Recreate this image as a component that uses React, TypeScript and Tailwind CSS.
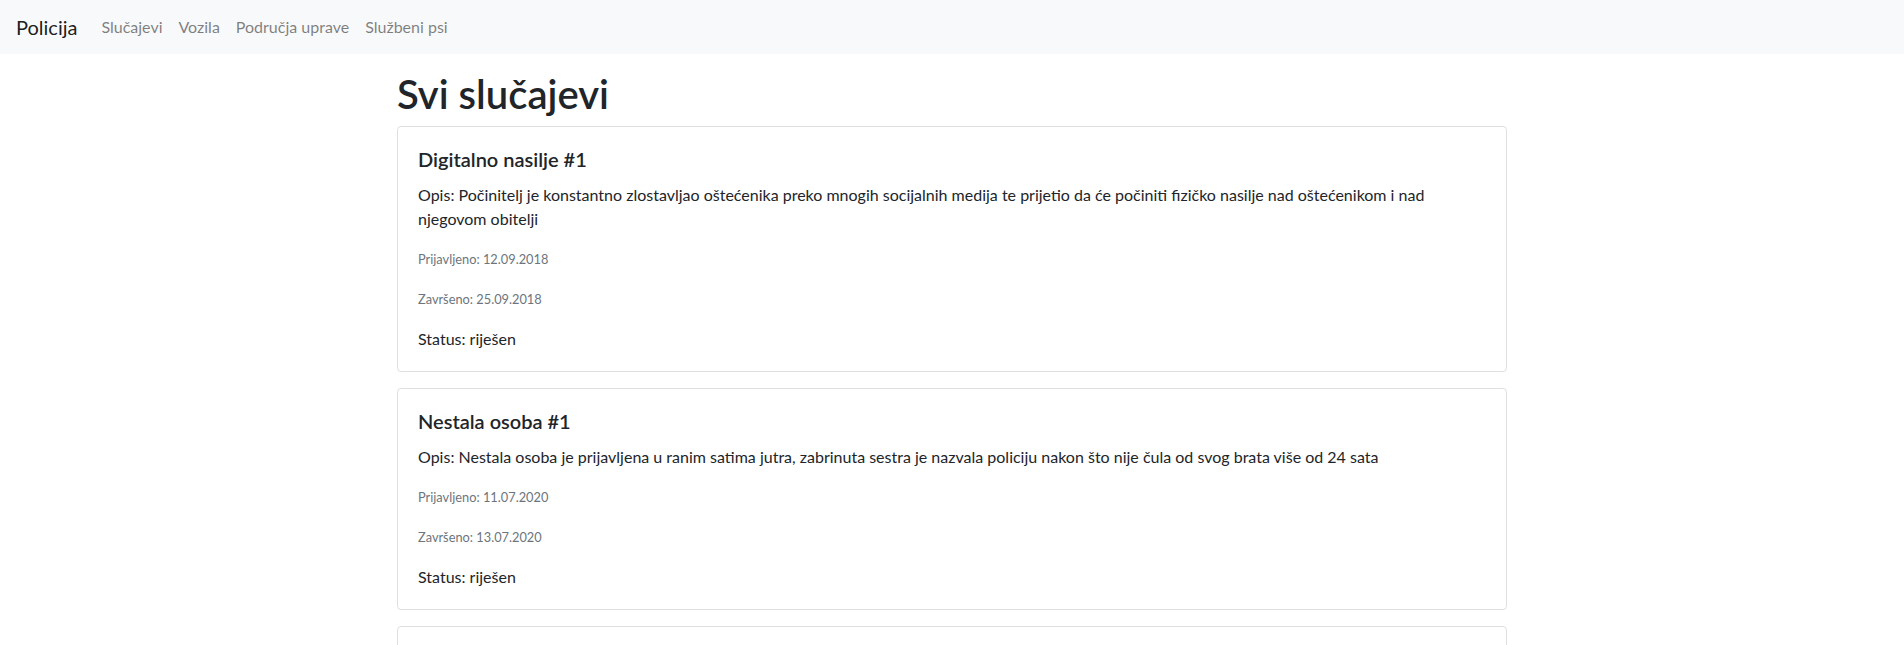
import React from "react";

const cases = [
  {
    title: "Digitalno nasilje #1",
    opis: "Počinitelj je konstantno zlostavljao oštećenika preko mnogih socijalnih medija te prijetio da će počiniti fizičko nasilje nad oštećenikom i nad njegovom obitelji",
    prijavljeno: "12.09.2018",
    zavrseno: "25.09.2018",
    status: "riješen",
  },
  {
    title: "Nestala osoba #1",
    opis: "Nestala osoba je prijavljena u ranim satima jutra, zabrinuta sestra je nazvala policiju nakon što nije čula od svog brata više od 24 sata",
    prijavljeno: "11.07.2020",
    zavrseno: "13.07.2020",
    status: "riješen",
  },
  {
    title: "Krađa vozila #1",
    opis: "Vlasnik je prijavio krađu vozila ispred stambene zgrade",
    prijavljeno: "02.03.2021",
    zavrseno: "10.03.2021",
    status: "riješen",
  },
];

export default function App() {
  return (
    <div className="min-h-screen bg-white text-[#212529] font-['Lato',sans-serif] text-base leading-6">
      <nav className="flex h-[54px] items-center bg-[#f8f9fa] px-4">
        <a className="mr-4 text-[20px] leading-[30px] text-black/90">Policija</a>
        <ul className="flex">
          {["Slučajevi", "Vozila", "Područja uprave", "Službeni psi"].map((l) => (
            <li key={l}>
              <a className="block px-2 py-2 text-black/50">{l}</a>
            </li>
          ))}
        </ul>
      </nav>
      <div className="mx-auto w-[1140px] px-[15px]">
        <h1 className="mt-4 mb-2 text-[40px] font-semibold leading-[48px]">Svi slučajevi</h1>
        {cases.map((c) => (
          <div key={c.title} className="mb-4 rounded border border-black/[0.125] p-5">
            <h5 className="mb-3 text-[20px] font-semibold leading-6">{c.title}</h5>
            <p className="mb-4 leading-6">Opis: {c.opis}</p>
            <p className="mb-4 h-6 text-[12.8px] leading-6 text-[#6c757d]">Prijavljeno: {c.prijavljeno}</p>
            <p className="mb-4 h-6 text-[12.8px] leading-6 text-[#6c757d]">Završeno: {c.zavrseno}</p>
            <p className="leading-6">Status: {c.status}</p>
          </div>
        ))}
      </div>
    </div>
  );
}
